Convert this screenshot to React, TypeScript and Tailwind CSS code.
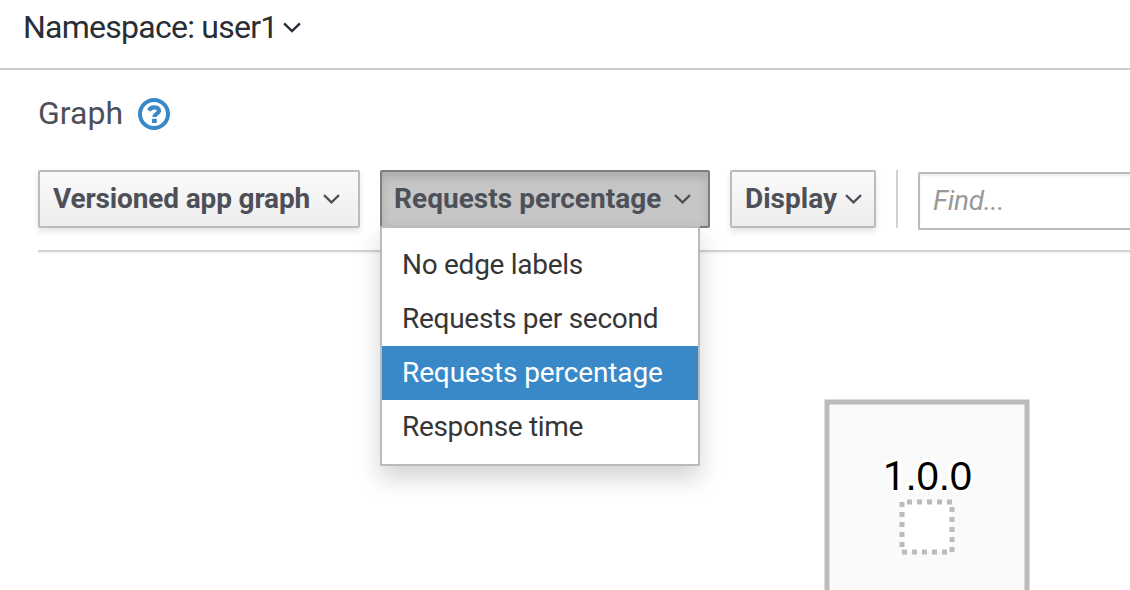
import React from "react";

function Chevron({ className = "" }: { className?: string }) {
  return (
    <svg viewBox="0 0 17 10" fill="none" className={`shrink-0 ${className}`}>
      <path d="M1 1.2 L8.5 8.4 L16 1.2" stroke="currentColor" strokeWidth="2.3" />
    </svg>
  );
}

function HelpIcon() {
  return (
    <svg viewBox="0 0 32 32" className="h-8 w-8 shrink-0 text-[#3989c9]">
      <circle cx="16" cy="16" r="14" fill="none" stroke="currentColor" strokeWidth="4" />
      <path
        d="M10.9 12.6 C12.2 10.2 14 9.4 16.2 9.4 C19 9.4 21 10.7 21 12.9 C21 15.8 16.4 15.6 16.3 19"
        fill="none"
        stroke="currentColor"
        strokeWidth="4.2"
      />
      <rect x="14" y="20.7" width="4.8" height="4.4" rx="0.7" fill="currentColor" />
    </svg>
  );
}

const options = [
  { label: "No edge labels", style: "text-[#363636] tracking-[-0.28px]" },
  { label: "Requests per second", style: "text-[#363636] tracking-[-0.28px]" },
  { label: "Requests percentage", style: "bg-[#3989c9] text-white tracking-[-0.12px]" },
  { label: "Response time", style: "text-[#363636] tracking-[-0.34px]" },
];

const button =
  "flex h-[58px] items-center rounded-[2px] border-2 text-[28px] font-bold text-[#4d5058] whitespace-nowrap";
const raised =
  "border-[#bbbbbb] bg-linear-to-b from-[#fafafa] to-[#ededed] shadow-[0_4px_6px_rgba(3,3,3,0.1)]";

export default function App() {
  return (
    <div className="flex h-[590px] w-[1130px] flex-col overflow-hidden bg-white font-[Roboto,sans-serif]">
      <header className="flex h-[70px] shrink-0 items-start border-b-2 border-[#cccccc] pl-[23px] text-[#292e34]">
        <button className="flex h-[54px] items-center">
          <span className="w-[260px] text-left text-[32px] tracking-[-0.75px] whitespace-nowrap">
            Namespace: user1
          </span>
          <Chevron className="h-[11px] w-[18px]" />
        </button>
      </header>

      <main className="flex flex-1 flex-col pl-[38px]">
        <div className="flex h-[100px] shrink-0 items-start pt-[22px]">
          <h1 className="w-[100px] text-[32px] leading-[43px] text-[#4d5058]">Graph</h1>
          <div className="pt-[6px]"><HelpIcon /></div>
        </div>

        <div className="flex h-[82px] shrink-0 items-start border-b-2 border-[#d1d1d1] shadow-[0_2px_0_#f5f5f5]">
          <button className={`${button} ${raised} w-[322px] pl-[13px]`}>
            <span className="w-[270px] text-left tracking-[-0.15px]">Versioned app graph</span>
            <Chevron className="h-[10px] w-[17px]" />
          </button>

          <div className="relative ml-5">
            <button
              className={`${button} w-[330px] border-[#7d7f7d] bg-[#c6c6c6] pl-[12px] shadow-[inset_0_6px_10px_rgba(3,3,3,0.125)]`}
            >
              <span className="w-[280px] text-left tracking-[0.04px]">Requests percentage</span>
              <Chevron className="h-[10px] w-[17px]" />
            </button>
            <ul className="absolute top-[56px] left-0 z-10 w-[320px] rounded-[1px] border-2 border-[#bbbbbb] bg-white py-[10px] shadow-[0_12px_24px_rgba(3,3,3,0.175)]">
              {options.map((o) => (
                <li
                  key={o.label}
                  className={`h-[54px] pl-5 text-[28px] leading-[54px] whitespace-nowrap ${o.style}`}
                >
                  {o.label}
                </li>
              ))}
            </ul>
          </div>

          <button className={`${button} ${raised} ml-5 w-[146px] pl-[13px]`}>
            <span className="w-[100px] text-left">Display</span>
            <Chevron className="h-[10px] w-[17px]" />
          </button>

          <div className="ml-5 h-[58px] w-[2px] bg-[#d1d1d1]" />

          <div className="mt-[2px] ml-5 flex h-[58px] flex-1 items-center rounded-l-[2px] border-2 border-r-0 border-[#bbbbbb] pl-[13px] text-[28px] tracking-[-0.3px] text-[#999999] italic shadow-[inset_0_2px_2px_rgba(3,3,3,0.075)]">
            Find...
          </div>
        </div>

        <svg viewBox="38 252 1092 338" className="h-[338px] w-[1092px] shrink-0">
          <rect x="827" y="402" width="200" height="220" fill="#fafafa" stroke="#bbbbbb" strokeWidth="5" />
          <path
            d="M902 502 H952 V552 H902 Z"
            fill="#ffffff"
            stroke="#bbbbbb"
            strokeWidth="5"
            strokeDasharray="5 5"
            strokeDashoffset="5"
          />
          <text
            x="927.5"
            y="490"
            textAnchor="middle"
            fontFamily="Liberation Sans, sans-serif"
            fontSize="40"
            stroke="#ffffff"
            strokeWidth="7"
            strokeLinejoin="round"
            paintOrder="stroke"
            fill="#000000"
          >
            <tspan fontFamily="Roboto, sans-serif">1</tspan>.0.0
          </text>
        </svg>
      </main>
    </div>
  );
}
